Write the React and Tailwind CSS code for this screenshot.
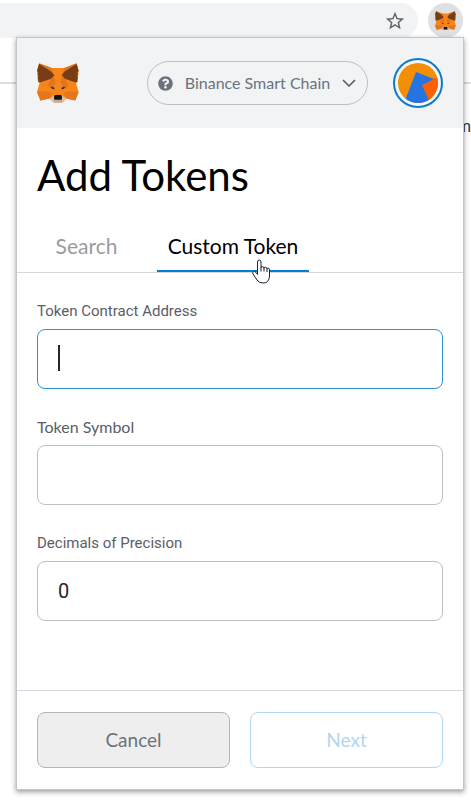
import React, { useState } from "react";

function Fox({ className }) {
  return (
    <svg viewBox="0 0 123 117" className={className} aria-hidden="true">
      <path fill="#f6851b" d="M43 15H80L116 1L122 24L119 56L114 58L122 85L112 110L86 104L74 116H49L37 104L10 110L0 85L8 58L3 56L0 24L6 1Z" />
      <path fill="#e2761b" d="M6 1L43 15L51 37ZM116 1L80 15L72 37Z" />
      <path fill="#763d16" d="M6 2L40 24L51 36L42 46L8 57L3 54L5 50L2 45L4 40L2 32L4 28L0 23ZM116 2L82 24L72 36L81 46L114 57L119 54L117 50L120 45L118 40L120 32L118 28L122 23Z" />
      <path fill="#e4761b" d="M0 85L33 83L37 104L10 110ZM122 85L90 83L86 104L112 110Z" />
      <path fill="#e8781d" d="M33 83L37 104L46 89ZM90 83L86 104L77 89Z" />
      <path fill="#e4751f" d="M51 36L42 46L31 64L54 64ZM72 36L81 46L92 64L69 64Z" />
      <path fill="#f6851b" d="M51 36H72L69 64L65 94H58L54 64Z" />
      <path fill="#d96a18" d="M31 67L47 65L54 77L50 78ZM92 67L76 65L69 77L73 78Z" />
      <path fill="#233447" d="M40 71L47 70L51 76L45 76ZM83 71L76 70L72 76L78 76Z" />
      <path fill="#d7c1b3" d="M37 104L53 94H70L86 104L74 116H49Z" />
      <path fill="#c0ad9e" d="M50 107H73L75 111L73 116H50L48 111Z" />
      <path fill="#161616" d="M53 94H70L73 97V106L71 108H52L50 106V97Z" />
    </svg>
  );
}

function Field({ id, label, labelClass, value, onChange, active }) {
  return (
    <div className="flex flex-col">
      <label htmlFor={id} className={`mb-2 leading-5 text-[#5b5d67] ${labelClass}`}>
        {label}
      </label>
      <div className="relative">
        <input
          id={id}
          value={value}
          onChange={onChange}
          className={`block h-[60px] w-full rounded-lg border bg-white px-5 font-[Roboto,sans-serif] text-xl text-[#24272a] caret-transparent outline-none ${
            active ? "border-[#2f91d8]" : "border-[#bbc0c5]"
          }`}
        />
        {active && <span className="absolute top-4 left-[21px] h-[26px] w-[2px] bg-[#24272a]" />}
      </div>
    </div>
  );
}

function Toolbar() {
  return (
    <div className="flex h-[37px] items-start bg-white pt-[3px]">
      <div className="flex h-[35px] flex-1 items-center justify-end rounded-r-full bg-[#f1f3f4] pr-3">
        <button aria-label="Bookmark this page">
          <svg viewBox="0 0 24 24" className="size-[22px]" fill="#5f6368">
            <path d="M22 9.24l-7.19-.62L12 2 9.19 8.63 2 9.24l5.46 4.73L5.82 21 12 17.27 18.18 21l-1.63-7.03L22 9.24zM12 15.4l-3.76 2.27 1-4.28-3.32-2.88 4.38-.38L12 6.1l1.71 4.04 4.38.38-3.32 2.88 1 4.28L12 15.4z" />
          </svg>
        </button>
      </div>
      <button aria-label="MetaMask" className="mr-2 ml-[10px] flex size-[35px] items-center justify-center rounded-full bg-[#dfe0e1]">
        <Fox className="w-[21px]" />
      </button>
    </div>
  );
}

function Header() {
  return (
    <header className="flex h-[90px] items-center justify-between bg-[#f2f3f4] px-5">
      <Fox className="w-[42px]" />
      <div className="flex items-center gap-[25px]">
        <button className="flex h-11 w-[221px] items-center justify-between rounded-full border border-[#bbc0c5] pr-[11px] pl-[10px] text-[#6a737d]">
          <svg viewBox="0 0 512 512" className="size-[15px]" fill="#6a737d">
            <path d="M504 256c0 137-111 248-248 248S8 393 8 256C8 119.100 119 8 256 8s248 111.100 248 248zM262.700 90c-54.500 0-89.300 23-116.500 63.800-3.500 5.300-2.400 12.400 2.700 16.300l34.700 26.300c5.200 3.900 12.600 3 16.700-2.100 17.900-22.700 30.100-35.800 57.300-35.800 20.400 0 45.700 13.100 45.700 33 0 15-12.400 22.700-32.500 34C247.100 238.500 216 254.900 216 296v4c0 6.600 5.400 12 12 12h56c6.600 0 12-5.400 12-12v-1.300c0-28.500 83.200-29.600 83.200-106.700 0-58-60.200-102-116.500-102zM256 338c-25.400 0-46 20.600-46 46 0 25.400 20.600 46 46 46s46-20.600 46-46c0-25.400-20.600-46-46-46z" />
          </svg>
          <span className="text-base">Binance Smart Chain</span>
          <svg viewBox="0 0 14 8" className="h-2 w-[14px]" fill="none" stroke="#53565a" strokeWidth="1.500">
            <path d="M1 1l6 6 6-6" />
          </svg>
        </button>
        <button aria-label="Account" className="flex size-[50px] items-center justify-center rounded-full border-2 border-[#0d7ad0] bg-[#f5f6f7]">
          <svg viewBox="0 0 40 40" className="size-10">
            <clipPath id="account-disc">
              <circle cx="20" cy="20" r="20" />
            </clipPath>
            <g clipPath="url(#account-disc)">
              <rect width="40" height="40" fill="#f28f06" />
              <path fill="#fb6003" d="M22 21L40 14V40H30Z" />
              <path fill="#2674e2" d="M18 9L36 16L24 22L32 40H6Z" />
            </g>
          </svg>
        </button>
      </div>
    </header>
  );
}

function PointerHand() {
  return (
    <svg viewBox="0 0 18 25" className="pointer-events-none absolute top-[35px] right-[39px] z-10 h-[25px] w-[18px]" aria-hidden="true">
      <path
        d="M5.500 14V3Q5.500 1 7.200 1T9 3V9Q9 7.500 10.500 7.500T12 9.500Q12 8 13.500 8.200T15 10.200Q15 9 16.300 9.200T17.500 11V17Q17.500 20 15.500 22.500Q14.500 24 11 24Q7 24 5 21L1 15Q.3 13.200 1.500 12.600Q2.700 12 4 13.500L5.500 15.500ZM9 9V12.500M12 9.500V12.500M15 10.200V13"
        fill="#fff"
        stroke="#1f2238"
        strokeWidth="1"
        strokeLinejoin="round"
      />
    </svg>
  );
}

export default function App() {
  const [address, setAddress] = useState("");
  const [symbol, setSymbol] = useState("");
  const [decimals, setDecimals] = useState("0");

  return (
    <div className="min-h-screen overflow-hidden bg-white font-[Lato,sans-serif]">
      <Toolbar />
      <div className="relative pr-[7px] pb-3 pl-4">
        <div className="absolute inset-x-0 top-[45px] border-t-2 border-[#dadce4]" />
        <p className="absolute top-20 right-0 font-[Roboto,sans-serif] text-base leading-5 text-[#303236]">m</p>

        <main className="relative border border-[#c4c6c9] bg-white shadow-[0_2px_5px_rgba(0,0,0,0.4)]">
          <Header />
          <h1 className="px-5 pt-[22px] text-[42px] leading-[50px] text-black">Add Tokens</h1>
          <div role="tablist" className="mt-6 flex border-b border-[#d6d9dc] px-[27px] text-[21px]">
            <button role="tab" aria-selected="false" className="h-12 w-[85px] pb-1 text-[#9b9b9b]">
              Search
            </button>
            <button role="tab" aria-selected="true" className="relative ml-7 h-12 w-[152px] border-b-2 border-[#037dd6] pb-[2px] text-black">
              Custom Token
              <PointerHand />
            </button>
          </div>

          <form className="flex flex-col gap-7 px-5 pt-7 pb-[69px]">
            <Field id="address" label="Token Contract Address" labelClass="font-[Roboto,sans-serif] text-[15px]" value={address} onChange={(e) => setAddress(e.target.value)} active />
            <Field id="symbol" label="Token Symbol" labelClass="font-[Lato,sans-serif] text-base" value={symbol} onChange={(e) => setSymbol(e.target.value)} />
            <Field id="decimals" label="Decimals of Precision" labelClass="font-[Roboto,sans-serif] text-[15px]" value={decimals} onChange={(e) => setDecimals(e.target.value)} />
          </form>

          <footer className="grid grid-cols-2 gap-5 border-t border-[#d2d8dd] px-5 py-[21px] text-[19px]">
            <button className="h-14 rounded-lg border border-[#b4b6b8] bg-[#eeeeee] text-[#6a737d]">Cancel</button>
            <button className="h-14 rounded-lg border border-[#b0d6f2] bg-white text-[#b0d6f2]">Next</button>
          </footer>
        </main>
      </div>
    </div>
  );
}
